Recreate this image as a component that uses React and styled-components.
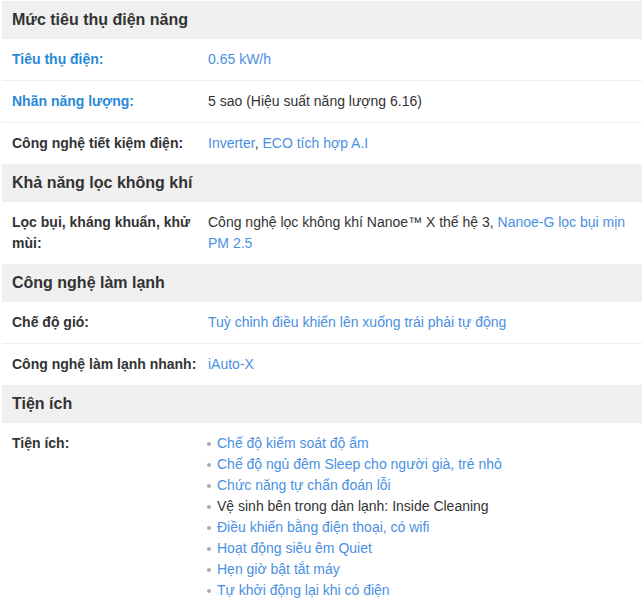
import React from "react";
import styled, { createGlobalStyle } from "styled-components";

const Global = createGlobalStyle`
  html, body { margin: 0; padding: 0; background: #fff; }
  body { font-family: "Liberation Sans", Arial, sans-serif; color: #333; }
`;

const Wrap = styled.div`
  padding: 1px 2px 0 2px;
`;

const SectionHead = styled.h3`
  margin: 0;
  background: #f0f0f0;
  height: 38px;
  box-sizing: border-box;
  padding: 0 10px;
  display: flex;
  align-items: center;
  font-size: 16px;
  font-weight: bold;
  color: #333;
`;

const List = styled.ul`
  list-style: none;
  margin: 0;
  padding: 0;
`;

const Row = styled.li`
  display: grid;
  grid-template-columns: 196px 1fr;
  border-top: ${(p) => (p.$first ? "none" : "1px solid #eee")};
  font-size: 14px;
  line-height: 21px;
`;

const Label = styled.div`
  padding: 10px 0 10px 10px;
  font-weight: bold;
  color: ${(p) => (p.$link ? "#288ad6" : "#333")};
`;

const Value = styled.div`
  padding: 10px 10px 10px 10px;
  color: #333;
`;

const Link = styled.a`
  color: #4a90e2;
  text-decoration: none;
`;

const Bullets = styled.ul`
  list-style: none;
  margin: 0;
  padding: 0;
`;

const Bullet = styled.li`
  display: flex;
  align-items: center;
  margin-left: -1px;
  &::before {
    content: "";
    width: 4px;
    height: 4px;
    border-radius: 50%;
    background: #aaa;
    margin-right: 6px;
    flex: none;
  }
`;

const sections = [
  {
    title: "Mức tiêu thụ điện năng",
    rows: [
      { label: "Tiêu thụ điện:", labelLink: true, value: [{ t: "0.65 kW/h", link: true }] },
      { label: "Nhãn năng lượng:", labelLink: true, value: [{ t: "5 sao (Hiệu suất năng lượng 6.16)" }] },
      {
        label: "Công nghệ tiết kiệm điện:",
        value: [{ t: "Inverter", link: true }, { t: ", " }, { t: "ECO tích hợp A.I", link: true }],
      },
    ],
  },
  {
    title: "Khả năng lọc không khí",
    rows: [
      {
        label: "Lọc bụi, kháng khuẩn, khử mùi:",
        value: [
          { t: "Công nghệ lọc không khí Nanoe™ X thế hệ 3, " },
          { t: "Nanoe-G lọc bụi mịn PM 2.5", link: true },
        ],
      },
    ],
  },
  {
    title: "Công nghệ làm lạnh",
    rows: [
      { label: "Chế độ gió:", value: [{ t: "Tuỳ chỉnh điều khiển lên xuống trái phải tự động", link: true }] },
      { label: "Công nghệ làm lạnh nhanh:", value: [{ t: "iAuto-X", link: true }] },
    ],
  },
  {
    title: "Tiện ích",
    rows: [
      {
        label: "Tiện ích:",
        list: [
          { t: "Chế độ kiểm soát độ ẩm", link: true },
          { t: "Chế độ ngủ đêm Sleep cho người già, trẻ nhỏ", link: true },
          { t: "Chức năng tự chẩn đoán lỗi", link: true },
          { t: "Vệ sinh bên trong dàn lạnh: Inside Cleaning" },
          { t: "Điều khiển bằng điện thoại, có wifi", link: true },
          { t: "Hoạt động siêu êm Quiet", link: true },
          { t: "Hẹn giờ bật tắt máy", link: true },
          { t: "Tự khởi động lại khi có điện", link: true },
        ],
      },
    ],
  },
];

const Part = ({ t, link }) => (link ? <Link href="#">{t}</Link> : <span>{t}</span>);

export default function App() {
  return (
    <>
      <Global />
      <Wrap>
        {sections.map((s) => (
          <section key={s.title}>
            <SectionHead>{s.title}</SectionHead>
            <List>
              {s.rows.map((r, i) => (
                <Row key={r.label} $first={i === 0}>
                  <Label $link={r.labelLink}>{r.label}</Label>
                  <Value>
                    {r.list ? (
                      <Bullets>
                        {r.list.map((it) => (
                          <Bullet key={it.t}>
                            <Part {...it} />
                          </Bullet>
                        ))}
                      </Bullets>
                    ) : (
                      r.value.map((p, j) => <Part key={j} {...p} />)
                    )}
                  </Value>
                </Row>
              ))}
            </List>
          </section>
        ))}
      </Wrap>
    </>
  );
}
